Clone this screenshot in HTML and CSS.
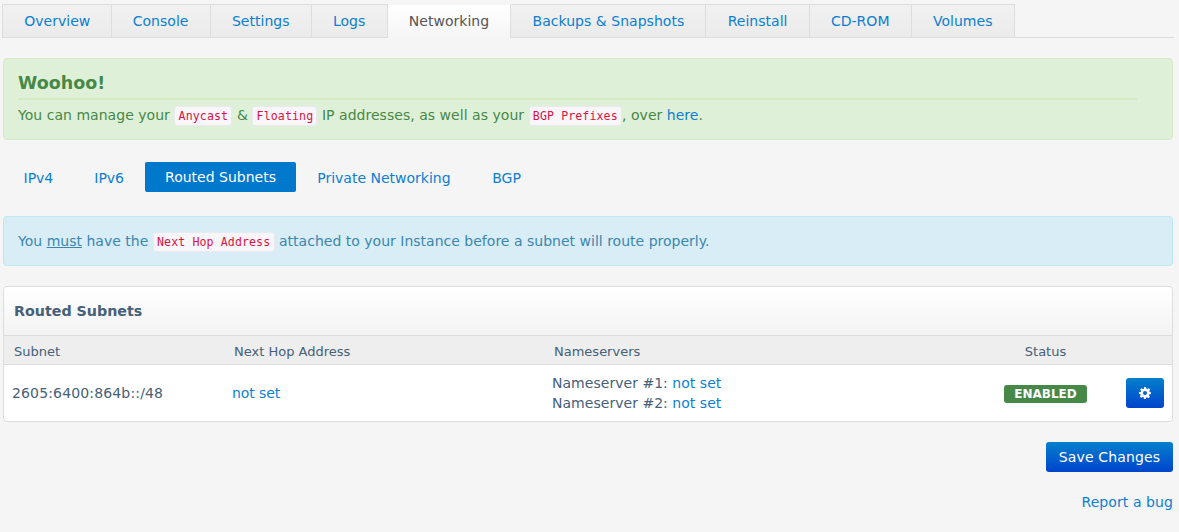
FILE: index.html
```html
<!DOCTYPE html>
<html lang="en">
<head>
<meta charset="utf-8">
<title>Networking</title>
<link rel="stylesheet" href="styles.css">
</head>
<body>
<nav class="tabs">
  <a class="tab" href="#">Overview</a>
  <a class="tab" href="#">Console</a>
  <a class="tab" href="#">Settings</a>
  <a class="tab" href="#">Logs</a>
  <a class="tab active" href="#">Networking</a>
  <a class="tab" href="#">Backups &amp; Snapshots</a>
  <a class="tab" href="#">Reinstall</a>
  <a class="tab" href="#">CD-ROM</a>
  <a class="tab" href="#">Volumes</a>
</nav>

<section class="alert success">
  <h4>Woohoo!</h4>
  <p>You can manage your <code>Anycast</code> &amp; <code>Floating</code> IP addresses, as well as your <code>BGP Prefixes</code>, over <a href="#">here</a>.</p>
</section>

<nav class="pills">
  <a class="pill narrow" href="#">IPv4</a>
  <a class="pill narrow" href="#">IPv6</a>
  <a class="pill active" href="#">Routed Subnets</a>
  <a class="pill" href="#">Private Networking</a>
  <a class="pill" href="#">BGP</a>
</nav>

<section class="alert info">
  You <u>must</u> have the <code>Next Hop Address</code> attached to your Instance before a subnet will route properly.
</section>

<section class="panel">
  <h3 class="panel-title">Routed Subnets</h3>
  <div class="row head">
    <div class="c-subnet">Subnet</div>
    <div class="c-hop">Next Hop Address</div>
    <div class="c-ns">Nameservers</div>
    <div class="c-status">Status</div>
  </div>
  <div class="row body">
    <div class="c-subnet">2605:6400:864b::/48</div>
    <div class="c-hop"><a href="#">not set</a></div>
    <div class="c-ns">
      <div>Nameserver #1: <a href="#">not set</a></div>
      <div>Nameserver #2: <a href="#">not set</a></div>
    </div>
    <div class="c-status"><span class="badge">ENABLED</span></div>
    <div class="c-act">
      <button class="btn btn-icon" aria-label="Settings">
        <svg viewBox="0 0 24 24" width="12" height="12"><path fill="#fff" fill-rule="evenodd" d="M10 0h4l.7 3.300 2 .8L19.600 2.300l2.800 2.800-1.800 2.900.8 2L24 10.700v3.300l-3.300.7-.8 2 1.800 2.900-2.800 2.800-2.900-1.800-2 .8L14 24h-4l-.7-3.300-2-.8-2.900 1.800-2.800-2.800 1.800-2.900-.8-2L0 14v-3.300l3.300-.7.8-2L2.300 5.100l2.800-2.800 2.900 1.800 2-.8zM12 8a4 4 0 1 0 0 8 4 4 0 0 0 0-8z"/></svg>
      </button>
    </div>
  </div>
</section>

<div class="actions"><button class="btn btn-save">Save Changes</button></div>
<div class="report"><a href="#">Report a bug</a></div>
</body>
</html>
```

FILE: styles.css
```css
* { box-sizing: border-box; }
html, body { height: 100%; }
body {
  margin: 0;
  padding: 4px 6px 0 3px;
  background: #f5f5f5;
  font-family: "DejaVu Sans", sans-serif;
  font-size: 14px;
  line-height: 20px;
  color: #456078;
  overflow: hidden;
}
a { color: #0b7fd1; text-decoration: none; }

.tabs {
  display: flex;
  height: 34px;
  margin: 0 -1px;
  border-bottom: 1px solid #ddd;
}
.tab {
  height: 34px;
  padding: 6px 21.200px 0;
  letter-spacing: 0.03px;
  background: linear-gradient(#f1f1f1, #ebebeb);
  border: 1px solid #ddd;
  border-left-width: 0;
}
.tab:first-child { border-left-width: 1px; padding-right: 20.200px; }
.tab.active {
  margin-top: 1px;
  height: 33px;
  padding-top: 6px;
  color: #555;
  background: linear-gradient(#fff, #f5f5f5);
  border-top-width: 0;
  border-bottom: 0;
}

.alert {
  border: 1px solid;
  border-radius: 4px;
}
.alert code {
  display: inline-block;
  font-family: "DejaVu Sans Mono", monospace;
  font-size: 11.600px;
  line-height: 16px;
  letter-spacing: 0.1px;
  padding: 1px 3.250px;
  color: #dd1144;
  background: #f7f7f9;
  border: 1px solid #e9e9ee;
  border-radius: 3px;
}
.success {
  margin-top: 20px;
  height: 82px;
  padding: 11px 35px 0 14px;
  background: #dff0d8;
  border-color: #d6e9c6;
  color: #468847;
}
.success h4 {
  margin: 0;
  height: 30px;
  padding-top: 1px;
  font-size: 17.500px;
  line-height: 24px;
  font-weight: bold;
  border-bottom: 2px solid #d6e9c6;
}
.success p { margin: 5px 0 0; letter-spacing: 0.03px; }

.pills {
  display: flex;
  margin-top: 22px;
  height: 30px;
}
.pill { padding: 6px 20.800px 0; }
.pill.narrow { padding: 6px 20.500px 0; }
.pill.active {
  color: #fff;
  background: #0079cc;
  border-radius: 2px;
  padding: 5px 20.500px 0;
}

.info {
  margin-top: 24px;
  height: 50px;
  padding: 14px 14px 0;
  background: #d9edf7;
  border-color: #bce8f1;
  color: #3a87ad;
  letter-spacing: 0.01px;
}

.panel {
  margin-top: 20px;
  height: 136px;
  background: #fff;
  border: 1px solid #ddd;
  border-radius: 4px;
}
.panel-title {
  margin: 0;
  height: 49px;
  padding: 14px 10px 0;
  font-size: 14.250px;
  line-height: 20px;
  font-weight: bold;
  background: linear-gradient(#fff, #f3f3f3);
  border-radius: 4px 4px 0 0;
  border-bottom: 1px solid #ddd;
}
.row { display: flex; align-items: center; }
.head {
  height: 29px;
  padding-top: 4px;
  background: #eee;
  border-bottom: 1px solid #ddd;
  font-size: 13px;
}
.body { height: 56px; }
.c-subnet { width: 220px; padding-left: 10px; flex: none; }
.c-hop { width: 320px; padding-left: 10px; flex: none; }
.c-ns { width: 440px; padding-left: 10px; flex: none; }
.c-status { width: 123px; text-align: center; flex: none; }
.c-act { flex: 1; display: flex; justify-content: flex-end; padding-right: 8px; }
.body .c-subnet { padding-left: 8px; letter-spacing: 0.15px; }
.body .c-hop { padding-left: 8px; letter-spacing: -0.1px; }
.body .c-ns { padding-left: 8px; letter-spacing: 0.03px; }

.badge {
  display: inline-block;
  height: 18px;
  width: 83px;
  background: #468847;
  color: #fff;
  border-radius: 3px;
  font-size: 12px;
  line-height: 18px;
  font-weight: bold;
  text-align: center;
  vertical-align: middle;
}
.btn {
  border: 0;
  color: #fff;
  border-radius: 3px;
  background: linear-gradient(#0480cc, #0044cc);
  font-family: inherit;
  padding: 0;
}
.btn-icon {
  width: 38px;
  height: 30px;
  display: flex;
  align-items: center;
  justify-content: center;
}
.actions { display: flex; justify-content: flex-end; margin-top: 20px; }
.btn-save { width: 127px; height: 30px; font-size: 14px; letter-spacing: 0.15px; }
.report { margin-top: 20px; text-align: right; letter-spacing: 0.08px; }
```
